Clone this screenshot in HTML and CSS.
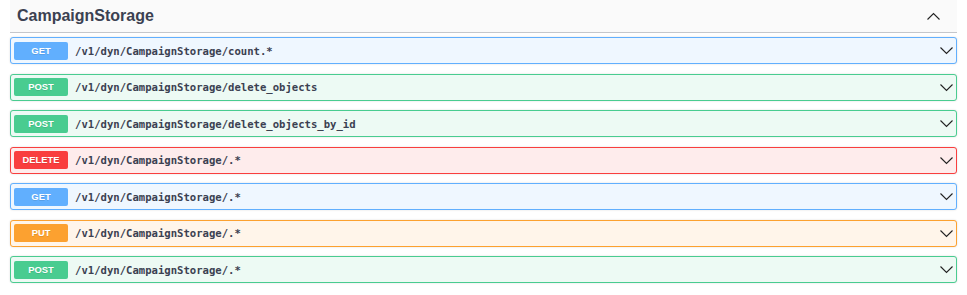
FILE: index.html
```html
<!DOCTYPE html>
<html lang="en">

<head>
  <meta charset="UTF-8">
  <title>CampaignStorage</title>
  <link rel="stylesheet" href="styles.css">
</head>

<body>
  <div class="tag-section">
    <div class="tag-header">
      <span class="tag-title">CampaignStorage</span>
      <svg class="arrow" viewBox="0 0 20 20" width="15" height="15"><path d="M2 14 L10 6 L18 14" fill="none" stroke="#222" stroke-width="1.5"/></svg>
    </div>

    <div class="opblock get">
      <span class="method">GET</span>
      <span class="path">/v1/dyn/CampaignStorage/count.*</span>
      <svg class="arrow" viewBox="0 0 20 20" width="15" height="15"><path d="M2 6 L10 14 L18 6" fill="none" stroke="#222" stroke-width="1.5"/></svg>
    </div>
    <div class="opblock post">
      <span class="method">POST</span>
      <span class="path">/v1/dyn/CampaignStorage/delete_objects</span>
      <svg class="arrow" viewBox="0 0 20 20" width="15" height="15"><path d="M2 6 L10 14 L18 6" fill="none" stroke="#222" stroke-width="1.5"/></svg>
    </div>
    <div class="opblock post">
      <span class="method">POST</span>
      <span class="path">/v1/dyn/CampaignStorage/delete_objects_by_id</span>
      <svg class="arrow" viewBox="0 0 20 20" width="15" height="15"><path d="M2 6 L10 14 L18 6" fill="none" stroke="#222" stroke-width="1.5"/></svg>
    </div>
    <div class="opblock delete">
      <span class="method">DELETE</span>
      <span class="path">/v1/dyn/CampaignStorage/.*</span>
      <svg class="arrow" viewBox="0 0 20 20" width="15" height="15"><path d="M2 6 L10 14 L18 6" fill="none" stroke="#222" stroke-width="1.5"/></svg>
    </div>
    <div class="opblock get">
      <span class="method">GET</span>
      <span class="path">/v1/dyn/CampaignStorage/.*</span>
      <svg class="arrow" viewBox="0 0 20 20" width="15" height="15"><path d="M2 6 L10 14 L18 6" fill="none" stroke="#222" stroke-width="1.5"/></svg>
    </div>
    <div class="opblock put">
      <span class="method">PUT</span>
      <span class="path">/v1/dyn/CampaignStorage/.*</span>
      <svg class="arrow" viewBox="0 0 20 20" width="15" height="15"><path d="M2 6 L10 14 L18 6" fill="none" stroke="#222" stroke-width="1.5"/></svg>
    </div>
    <div class="opblock post">
      <span class="method">POST</span>
      <span class="path">/v1/dyn/CampaignStorage/.*</span>
      <svg class="arrow" viewBox="0 0 20 20" width="15" height="15"><path d="M2 6 L10 14 L18 6" fill="none" stroke="#222" stroke-width="1.5"/></svg>
    </div>
  </div>
</body>

</html>
```

FILE: styles.css
```css
body {
  margin: 0;
  background-color: #ffffff;
  font-family: "Liberation Sans", Arial, sans-serif;
  color: #3b4151;
}

.tag-section {
  padding: 0 10px;
}

.tag-header {
  display: flex;
  align-items: center;
  justify-content: space-between;
  height: 32px;
  padding: 0 16px 0 7px;
  background-color: #fafafa;
  border-bottom: 1px solid #c4c6cb;
  margin-bottom: 4px;
}

.tag-title {
  font-size: 16px;
  font-weight: bold;
  color: #3b4151;
}

.opblock {
  display: flex;
  align-items: center;
  box-sizing: border-box;
  height: 27px;
  margin-bottom: 9.5px;
  padding: 0 2px 0 3px;
  border: 1px solid;
  border-radius: 3px;
  box-shadow: 0 0 2px rgba(0, 0, 0, 0.15);
}

.method {
  width: 54px;
  height: 18px;
  line-height: 18px;
  border-radius: 2px;
  text-align: center;
  color: #fff;
  font-size: 9.4px;
  font-weight: bold;
  text-shadow: 0 1px 0 rgba(0, 0, 0, 0.1);
}

.path {
  flex: 1;
  margin-left: 7px;
  font-family: "DejaVu Sans Mono", monospace;
  font-size: 10.6px;
  font-weight: bold;
  color: #3b4151;
}

.get {
  border-color: #61affe;
  background-color: #eff7ff;
}

.get .method {
  background-color: #61affe;
}

.post {
  border-color: #49cc90;
  background-color: #edfaf4;
}

.post .method {
  background-color: #49cc90;
}

.delete {
  border-color: #f93e3e;
  background-color: #feecec;
}

.delete .method {
  background-color: #f93e3e;
}

.put {
  border-color: #fca130;
  background-color: #fff5ea;
}

.put .method {
  background-color: #fca130;
}
```
